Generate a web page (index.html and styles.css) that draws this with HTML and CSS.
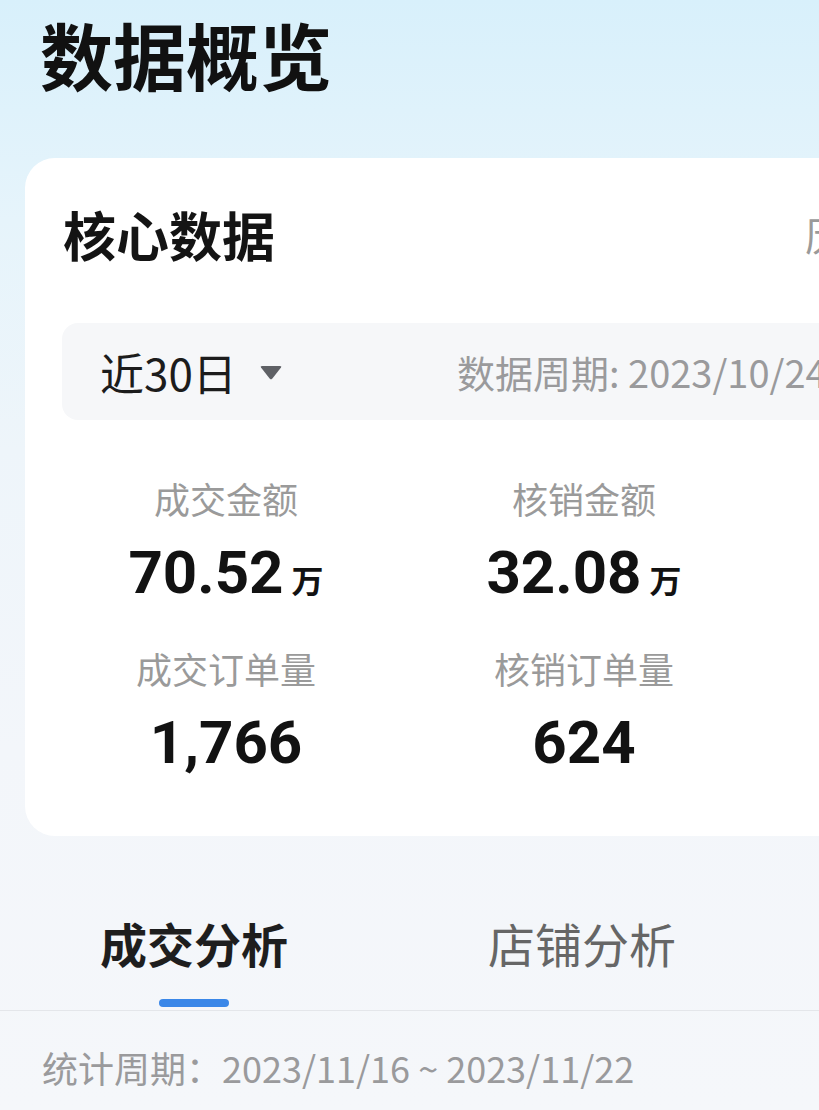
FILE: index.html
```html
<!DOCTYPE html>
<html lang="zh-CN">
<head>
<meta charset="utf-8">
<title>数据概览</title>
<link rel="stylesheet" href="styles.css">
</head>
<body>
<div class="page">
  <h1 class="page-title">数据概览</h1>

  <section class="card">
    <div class="card-head">
      <h2 class="card-title">核心数据</h2>
      <span class="card-link">历史数据</span>
    </div>

    <div class="filter-bar">
      <div class="range">
        <span>近30日</span>
        <svg class="caret" width="24" height="16" viewBox="0 0 24 16"><path d="M2 2.5 Q1 1 3 1 H21 Q23 1 22 2.5 L13.4 13.6 Q12 15.2 10.6 13.6 Z" fill="#5f6166"/></svg>
      </div>
      <div class="period">数据周期: 2023/10/24 ~ 2023/11/22</div>
    </div>

    <div class="metrics">
      <div class="metric">
        <div class="metric-label">成交金额</div>
        <div class="metric-value">70.52<span class="unit">万</span></div>
      </div>
      <div class="metric">
        <div class="metric-label">核销金额</div>
        <div class="metric-value">32.08<span class="unit">万</span></div>
      </div>
      <div class="metric">
        <div class="metric-label">退款金额</div>
        <div class="metric-value">1.26<span class="unit">万</span></div>
      </div>
      <div class="metric">
        <div class="metric-label">成交订单量</div>
        <div class="metric-value">1,766</div>
      </div>
      <div class="metric">
        <div class="metric-label">核销订单量</div>
        <div class="metric-value">624</div>
      </div>
      <div class="metric">
        <div class="metric-label">退款订单量</div>
        <div class="metric-value">35</div>
      </div>
    </div>
  </section>

  <nav class="tabs">
    <div class="tab active">
      <span class="tab-text">成交分析</span>
      <span class="tab-bar"></span>
    </div>
    <div class="tab">
      <span class="tab-text">店铺分析</span>
      <span class="tab-bar"></span>
    </div>
  </nav>

  <div class="stat-period">统计周期：2023/11/16 ~ 2023/11/22</div>
</div>
</body>
</html>
```

FILE: styles.css
```css
html, body {
  margin: 0;
  padding: 0;
}
body {
  width: 819px;
  height: 1110px;
  overflow: hidden;
  font-family: "Noto Sans CJK SC", "Noto Sans", sans-serif;
  color: #111;
}
.page {
  width: 819px;
  height: 1110px;
  overflow: hidden;
  background: linear-gradient(180deg, #d8f0fb 0px, #e6f4fb 220px, #eef5fa 450px, #f3f6fa 750px, #f5f7fa 1110px);
}
.page-title {
  margin: 0;
  padding: 17px 0 0 40px;
  font-size: 73px;
  line-height: 73px;
  font-weight: 700;
  color: #111;
  white-space: nowrap;
}
.card {
  margin: 68px 0 0 25px;
  width: 1150px;
  background: #fff;
  border-radius: 30px;
  padding-bottom: 58px;
}
.card-head {
  display: flex;
  align-items: center;
  padding: 50px 0 0 38px;
  height: 53px;
}
.card-title {
  margin: 0;
  font-size: 53px;
  line-height: 53px;
  font-weight: 700;
  color: #141414;
  white-space: nowrap;
}
.card-link {
  font-size: 40px;
  line-height: 53px;
  color: #9a9a9a;
  margin-left: 530px;
  white-space: nowrap;
}
.filter-bar {
  margin: 62px 0 0 37px;
  height: 97px;
  border-radius: 16px;
  background: #f6f7f9;
  display: flex;
  align-items: center;
  padding-left: 38px;
  white-space: nowrap;
}
.range {
  display: flex;
  align-items: center;
  gap: 22px;
  font-size: 44px;
  color: #1c1c1c;
  width: 357px;
}
.caret {
  margin-top: 2px;
}
.period {
  font-size: 38px;
  color: #9a9a9c;
}
.metrics {
  display: grid;
  grid-template-columns: repeat(3, 358px);
  row-gap: 32px;
  margin-top: 56px;
  padding-left: 22px;
}
.metric {
  display: flex;
  flex-direction: column;
  align-items: center;
  gap: 18px;
}
.metric-label {
  font-size: 36px;
  line-height: 44px;
  color: #9a9a9a;
  white-space: nowrap;
}
.metric-value {
  font-family: "Roboto", "Liberation Sans", sans-serif;
  font-weight: 700;
  font-size: 60px;
  line-height: 70px;
  color: #121212;
  white-space: nowrap;
}
.unit {
  font-family: "Noto Sans CJK SC", sans-serif;
  font-size: 32px;
  font-weight: 700;
  margin-left: 8px;
}
.tabs {
  display: flex;
  gap: 200px;
  margin-top: 77px;
  padding-left: 100px;
  border-bottom: 1px solid #e4e6ea;
  padding-bottom: 3px;
}
.tab {
  display: flex;
  flex-direction: column;
  align-items: center;
  gap: 26px;
}
.tab-text {
  font-size: 47px;
  line-height: 60px;
  color: #666;
  white-space: nowrap;
}
.tab.active .tab-text {
  color: #1e1e1e;
  font-weight: 700;
}
.tab-bar {
  width: 70px;
  height: 8px;
  border-radius: 4px;
  background: transparent;
}
.tab.active .tab-bar {
  background: #3a87e8;
}
.stat-period {
  margin-top: 34px;
  padding-left: 42px;
  font-size: 36px;
  line-height: 44px;
  color: #9a9a9c;
  white-space: nowrap;
}
```
